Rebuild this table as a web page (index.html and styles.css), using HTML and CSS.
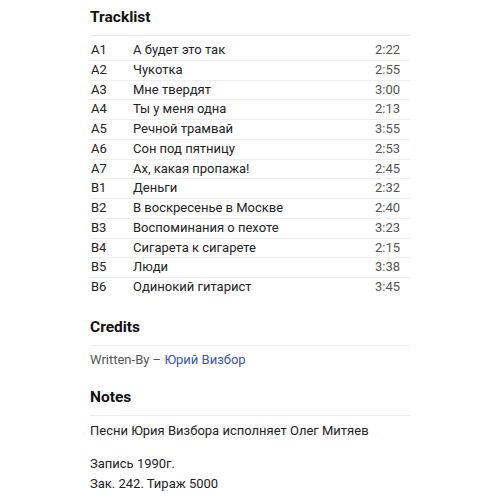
FILE: index.html
```html
<!DOCTYPE html>
<html>
<head>
<meta charset="utf-8">
<link rel="stylesheet" href="styles.css">
</head>
<body>
<main class="page">
  <section class="section">
    <h2 class="heading">Tracklist</h2>
    <div class="tracks">
      <div class="row"><span class="pos">A1</span><span class="title">А будет это так</span><span class="dur">2:22</span></div>
      <div class="row"><span class="pos">A2</span><span class="title">Чукотка</span><span class="dur">2:55</span></div>
      <div class="row"><span class="pos">A3</span><span class="title">Мне твердят</span><span class="dur">3:00</span></div>
      <div class="row"><span class="pos">A4</span><span class="title">Ты у меня одна</span><span class="dur">2:13</span></div>
      <div class="row"><span class="pos">A5</span><span class="title">Речной трамвай</span><span class="dur">3:55</span></div>
      <div class="row"><span class="pos">A6</span><span class="title">Сон под пятницу</span><span class="dur">2:53</span></div>
      <div class="row"><span class="pos">A7</span><span class="title">Ах, какая пропажа!</span><span class="dur">2:45</span></div>
      <div class="row"><span class="pos">B1</span><span class="title">Деньги</span><span class="dur">2:32</span></div>
      <div class="row"><span class="pos">B2</span><span class="title">В воскресенье в Москве</span><span class="dur">2:40</span></div>
      <div class="row"><span class="pos">B3</span><span class="title">Воспоминания о пехоте</span><span class="dur">3:23</span></div>
      <div class="row"><span class="pos">B4</span><span class="title">Сигарета к сигарете</span><span class="dur">2:15</span></div>
      <div class="row"><span class="pos">B5</span><span class="title">Люди</span><span class="dur">3:38</span></div>
      <div class="row"><span class="pos">B6</span><span class="title">Одинокий гитарист</span><span class="dur">3:45</span></div>
    </div>
  </section>
  <section class="section">
    <h2 class="heading">Credits</h2>
    <p class="credit">Written-By – <a class="link" href="#">Юрий Визбор</a></p>
  </section>
  <section class="section">
    <h2 class="heading">Notes</h2>
    <div class="notes">
      <p class="note">Песни Юрия Визбора исполняет Олег Митяев</p>
      <p class="note gap">Запись 1990г.</p>
      <p class="note">Зак. 242. Тираж 5000</p>
    </div>
  </section>
</main>
</body>
</html>
```
FILE: styles.css
```css
html, body {
  margin: 0;
  padding: 0;
  background: #fff;
}
body {
  font-family: Roboto, "Noto Sans", sans-serif;
  font-size: 13px;
  color: #222;
}
.page {
  width: 320px;
  margin-left: 90px;
  padding-top: 7px;
}
.section {
  margin-bottom: 20px;
}
.heading {
  margin: 0;
  font-size: 15.5px;
  font-weight: 700;
  line-height: 20px;
  padding-bottom: 8px;
  border-bottom: 1px solid #ececec;
  color: #111;
}
.tracks {
  margin-top: 5px;
  margin-bottom: 1px;
}
.row {
  display: flex;
  height: 18.75px;
  line-height: 18.75px;
  border-bottom: 1px solid #eeeeee;
  padding-left: 1px;
}
.row:last-child {
  border-bottom: none;
}
.pos {
  width: 42px;
  flex: none;
}
.title {
  flex: 1;
}
.dur {
  color: #555;
  padding-right: 10px;
}
.credit {
  margin: 0;
  padding-top: 7px;
  color: #555;
  line-height: 14px;
}
.link {
  color: #3a56a8;
  text-decoration: none;
}
.notes {
  padding-top: 5px;
}
.note {
  margin: 0;
  line-height: 20px;
}
.gap {
  margin-top: 13px;
}
```
